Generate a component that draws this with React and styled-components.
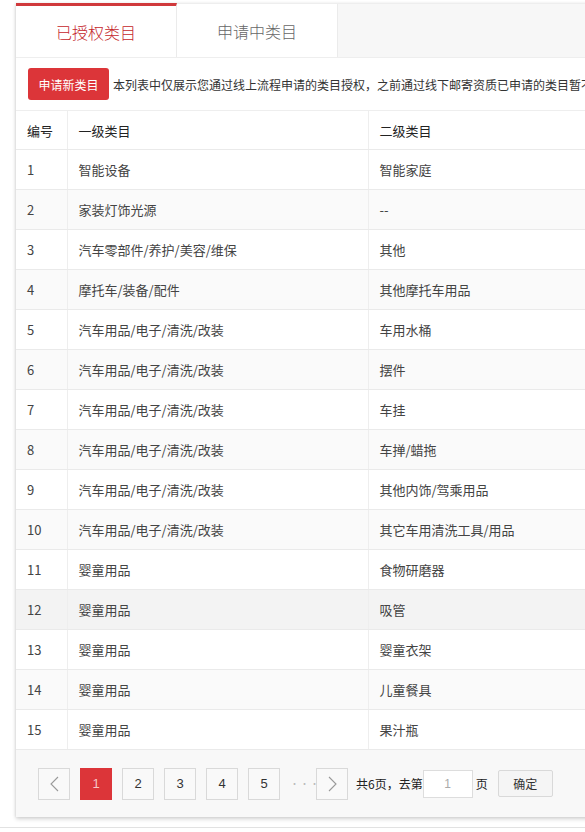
import styled, { createGlobalStyle } from 'styled-components';

const GlobalStyle = createGlobalStyle`
  html, body {
    margin: 0;
    padding: 0;
    background: #fff;
    overflow: hidden;
  }
  body {
    font-family: "Noto Sans CJK SC", "Microsoft YaHei", "Noto Sans", sans-serif;
    color: #333;
  }
`;

const Page = styled.div`
  width: 585px;
  height: 832px;
  overflow: hidden;
  padding-top: 3px;
  box-sizing: border-box;
`;

const Panel = styled.div`
  margin-left: 16px;
  width: 820px;
  background: #fff;
  box-shadow: 0 2px 4px rgba(0, 0, 0, 0.18), -1px 0 2px rgba(0, 0, 0, 0.06);
`;

const TabBar = styled.div`
  display: flex;
  height: 54px;
  background: #f7f7f7;
  border-top: 1px solid #eee;
  box-sizing: border-box;
`;

const Tab = styled.div`
  width: 161px;
  display: flex;
  align-items: center;
  justify-content: center;
  font-size: 16px;
  font-weight: 300;
  background: #fff;
  box-sizing: border-box;
  margin-top: ${p => (p.$active ? '-1px' : '0')};
  border-top: ${p => (p.$active ? '3px solid #d0393c' : 'none')};
  border-right: 1px solid #ebebeb;
  color: ${p => (p.$active ? '#c4262b' : '#666')};
`;

const Toolbar = styled.div`
  display: flex;
  align-items: center;
  gap: 4px;
  height: 54px;
  padding: 0 12px;
  border-bottom: 1px solid #eee;
  border-top: 1px solid #eee;
  box-sizing: border-box;
  white-space: nowrap;
`;

const RedButton = styled.button`
  width: 81px;
  height: 32px;
  border: none;
  border-radius: 3px;
  background: #dc3539;
  color: #fff;
  font-family: inherit;
  font-size: 12px;
  padding: 0;
  flex: none;
`;

const Notice = styled.span`
  font-size: 12px;
  color: #333;
`;

const Table = styled.table`
  width: 100%;
  border-collapse: collapse;
  font-size: 13px;
`;

const Th = styled.th`
  height: 38px;
  text-align: left;
  font-weight: normal;
  color: #222;
  padding: 0 11px;
  border-bottom: 1px solid #eaeaea;
  border-left: 1px solid #eee;
  &:first-child {
    border-left: none;
  }
`;

const Tr = styled.tr`
  background: ${p => (p.$hover ? '#f3f3f3' : p.$even ? '#fafafa' : '#fff')};
`;

const Td = styled.td`
  height: 39px;
  padding: 0 11px;
  color: #444;
  border-bottom: 1px solid #eaeaea;
  border-left: 1px solid #eee;
  &:first-child {
    border-left: none;
  }
`;

const Pager = styled.div`
  display: flex;
  align-items: center;
  height: 67px;
  padding-left: 22px;
  background: #f8f8f8;
  font-size: 12px;
`;

const PageBtn = styled.div`
  width: 32px;
  height: 32px;
  box-sizing: border-box;
  display: flex;
  align-items: center;
  justify-content: center;
  margin-right: 10px;
  border: 1px solid ${p => (p.$active ? '#dc3539' : '#d9d9d9')};
  background: ${p => (p.$active ? '#dc3539' : '#f9f9f9')};
  color: ${p => (p.$active ? '#f6c6c6' : '#333')};
  font-family: "Liberation Sans", Arial, sans-serif;
  font-size: 13px;
`;

const Dots = styled.span`
  width: 16px;
  margin-right: 10px;
  text-align: center;
  color: #bbb;
  font-size: 9px;
  letter-spacing: 1px;
`;

const PagerText = styled.span`
  color: #222;
  font-size: 12px;
  margin-left: ${p => p.$ml || 0}px;
`;

const PageInput = styled.div`
  width: 50px;
  height: 28px;
  box-sizing: border-box;
  border: 1px solid #ddd;
  background: #fff;
  display: flex;
  align-items: center;
  justify-content: center;
  color: #aaa;
  font-family: "Liberation Sans", Arial, sans-serif;
  font-size: 12px;
  margin: 0 3px 0 0;
`;

const ConfirmBtn = styled.div`
  width: 55px;
  height: 27px;
  box-sizing: border-box;
  border: 1px solid #d9d9d9;
  border-radius: 2px;
  background: #f5f5f5;
  display: flex;
  align-items: center;
  justify-content: center;
  margin-left: 10px;
  font-size: 12px;
  color: #333;
`;

const BottomRule = styled.div`
  margin-top: 10px;
  border-top: 1px solid #e2e2e2;
`;

const Chevron = ({ dir }) => (
  <svg width="9" height="16" viewBox="0 0 9 16" fill="none" stroke="#999" strokeWidth="1.1">
    {dir === 'left' ? <path d="M8 1 L1 8 L8 15" /> : <path d="M1 1 L8 8 L1 15" />}
  </svg>
);

const rows = [
  ['智能设备', '智能家庭'],
  ['家装灯饰光源', '--'],
  ['汽车零部件/养护/美容/维保', '其他'],
  ['摩托车/装备/配件', '其他摩托车用品'],
  ['汽车用品/电子/清洗/改装', '车用水桶'],
  ['汽车用品/电子/清洗/改装', '摆件'],
  ['汽车用品/电子/清洗/改装', '车挂'],
  ['汽车用品/电子/清洗/改装', '车掸/蜡拖'],
  ['汽车用品/电子/清洗/改装', '其他内饰/驾乘用品'],
  ['汽车用品/电子/清洗/改装', '其它车用清洗工具/用品'],
  ['婴童用品', '食物研磨器'],
  ['婴童用品', '吸管'],
  ['婴童用品', '婴童衣架'],
  ['婴童用品', '儿童餐具'],
  ['婴童用品', '果汁瓶'],
];

export default function App() {
  return (
    <Page>
      <GlobalStyle />
      <Panel>
        <TabBar>
          <Tab $active>已授权类目</Tab>
          <Tab>申请中类目</Tab>
        </TabBar>
        <Toolbar>
          <RedButton>申请新类目</RedButton>
          <Notice>本列表中仅展示您通过线上流程申请的类目授权，之前通过线下邮寄资质已申请的类目暂不在此展示</Notice>
        </Toolbar>
        <Table>
          <colgroup>
            <col style={{ width: 51 }} />
            <col style={{ width: 301 }} />
            <col />
          </colgroup>
          <thead>
            <tr>
              <Th>编号</Th>
              <Th>一级类目</Th>
              <Th>二级类目</Th>
            </tr>
          </thead>
          <tbody>
            {rows.map(([a, b], i) => (
              <Tr key={i} $even={i % 2 === 1} $hover={i === 11}>
                <Td>{i + 1}</Td>
                <Td>{a}</Td>
                <Td>{b}</Td>
              </Tr>
            ))}
          </tbody>
        </Table>
        <Pager>
          <PageBtn><Chevron dir="left" /></PageBtn>
          <PageBtn $active>1</PageBtn>
          <PageBtn>2</PageBtn>
          <PageBtn>3</PageBtn>
          <PageBtn>4</PageBtn>
          <PageBtn>5</PageBtn>
          <Dots>···</Dots>
          <PageBtn><Chevron dir="right" /></PageBtn>
          <PagerText $ml={-2}>共6页，去第</PagerText>
          <PageInput>1</PageInput>
          <PagerText>页</PagerText>
          <ConfirmBtn>确定</ConfirmBtn>
        </Pager>
      </Panel>
      <BottomRule />
    </Page>
  );
}
